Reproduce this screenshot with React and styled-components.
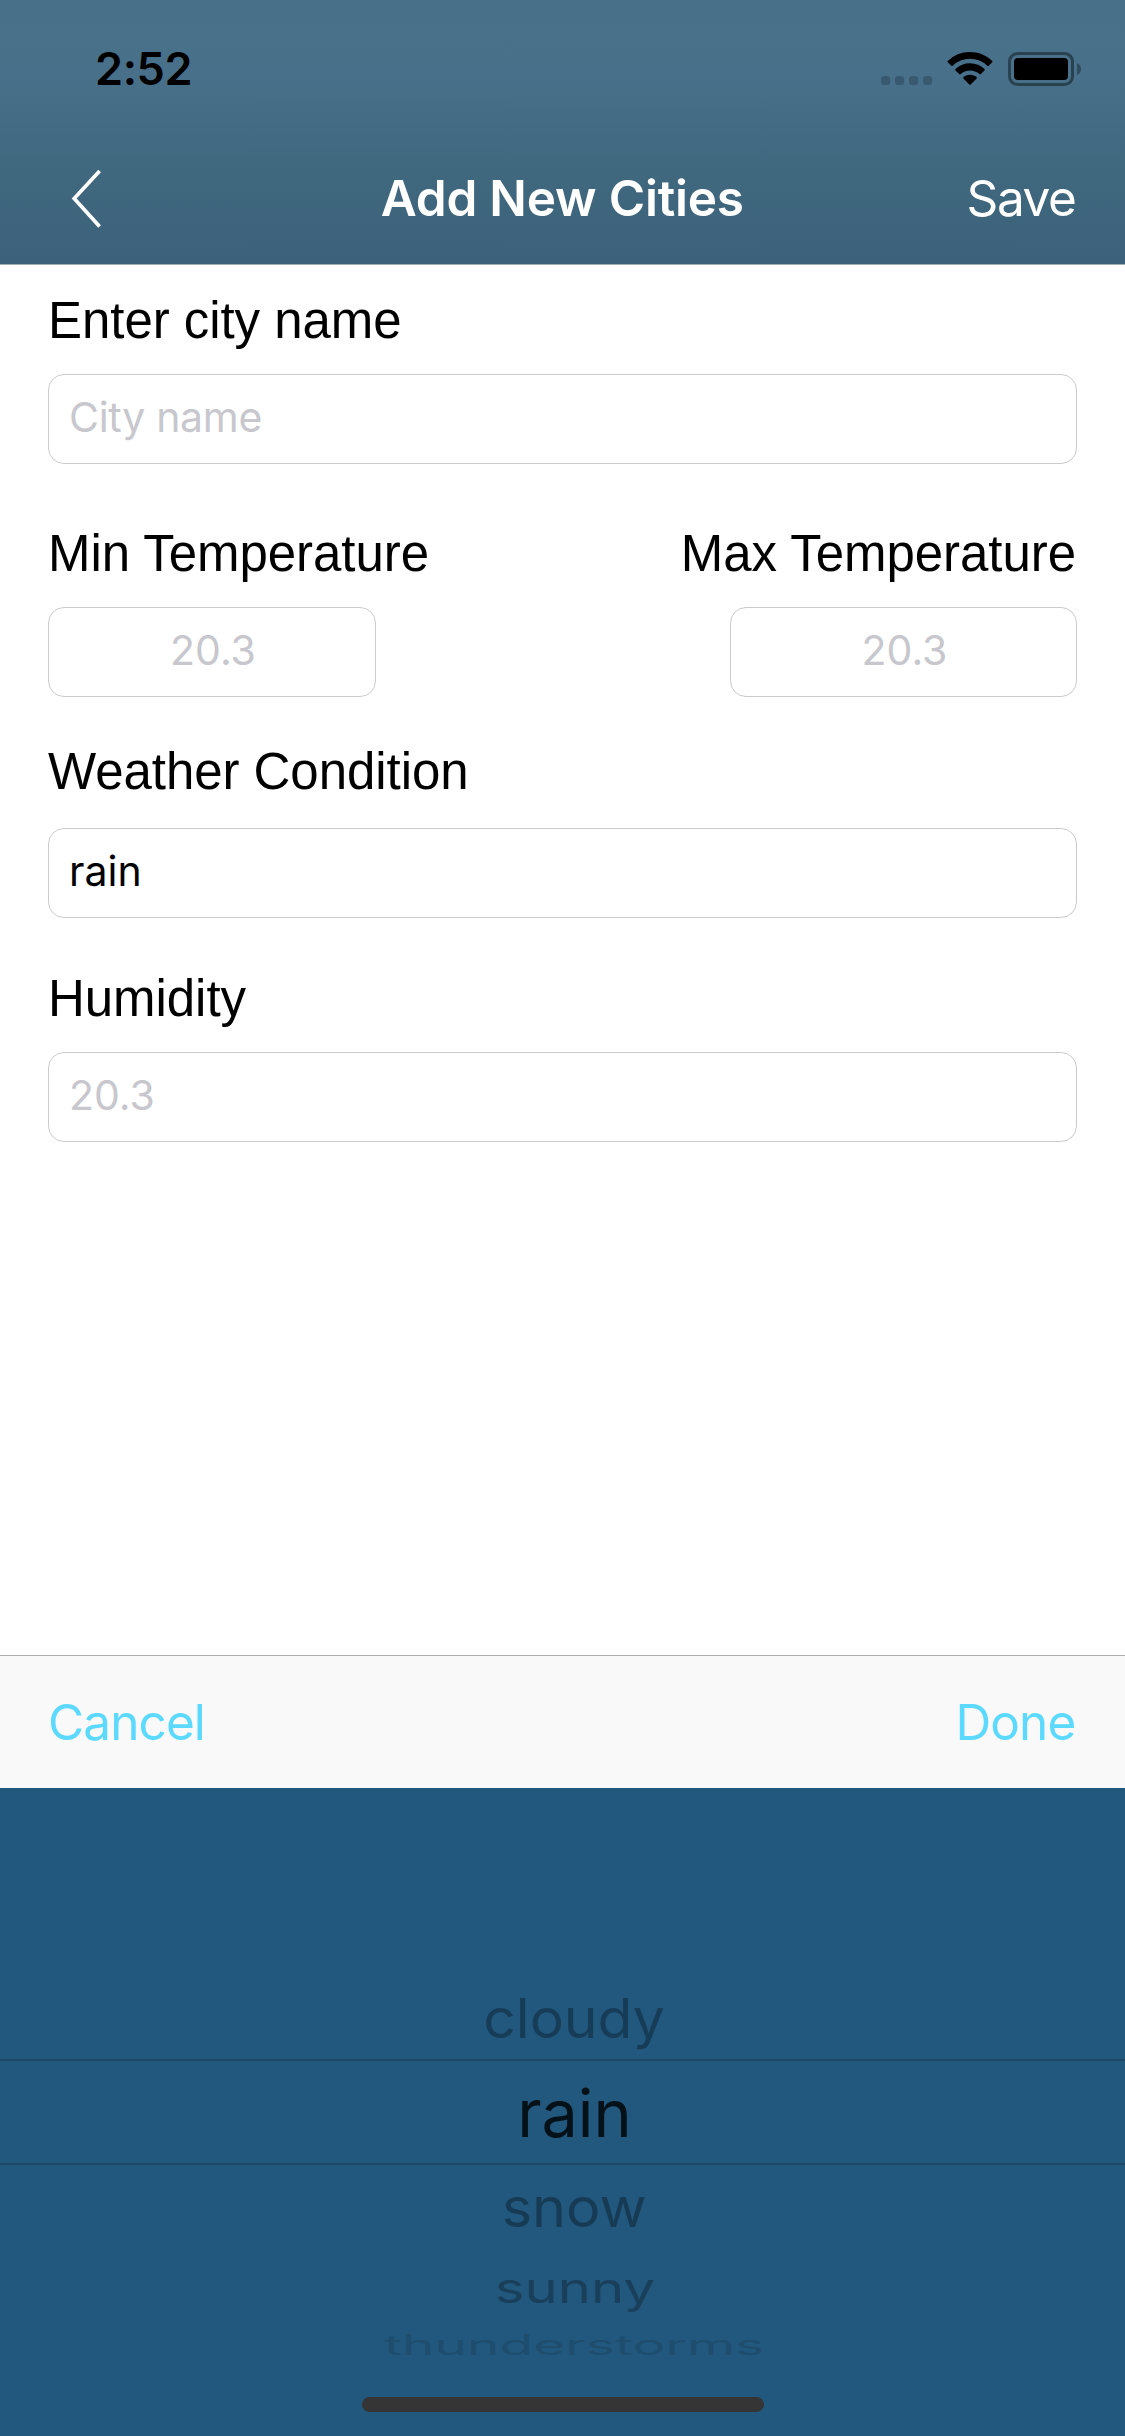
import React from 'react';
import styled, { createGlobalStyle } from 'styled-components';

const Global = createGlobalStyle`
  * { box-sizing: border-box; }
  body { margin: 0; background: #fff; }
`;

const Screen = styled.div`
  display: flex;
  flex-direction: column;
  width: 1125px;
  height: 2436px;
  overflow: hidden;
  background: #fff;
  color: #000;
  font-family: Inter, 'Liberation Sans', sans-serif;
`;

const Header = styled.header`
  height: 265px;
  border-bottom: 1px solid #a2adb1;
  background: linear-gradient(180deg, #487189 0, #48708a 75px, #40687f 165px, #3b627a 264px);
`;

const StatusBar = styled.div`
  display: flex;
  align-items: center;
  height: 132px;
  padding: 6px 43px 0 95px;
`;

const Clock = styled.div`
  flex: 1;
  font-size: 45px;
  font-weight: 600;
  line-height: 56px;
  letter-spacing: -0.4px;
`;

const StatusIcons = styled.svg`
  display: block;
  width: 201px;
  height: 34px;
`;

const NavBar = styled.nav`
  display: grid;
  grid-template-columns: 1fr auto 1fr;
  align-items: center;
  height: 132px;
  padding: 0 49.5px 0 71px;
  color: #fff;
`;

const BackIcon = styled.svg`
  display: block;
  width: 32px;
  height: 60px;
`;

const Title = styled.h1`
  margin: 0 22px 0 0;
  font-size: 49.5px;
  font-weight: 600;
  line-height: 60px;
  letter-spacing: -0.2px;
`;

const BarButton = styled.div`
  justify-self: end;
  font-size: 49.5px;
  line-height: 60px;
  letter-spacing: ${(p) => p.$tracking}px;
  color: ${(p) => p.$color};
`;

const Form = styled.main`
  flex: 1;
  padding: 26px 48px 0;
`;

const Field = styled.div`
  display: flex;
  flex-direction: column;
  align-items: ${(p) => p.$align || 'stretch'};
  gap: ${(p) => p.$gap || 23}px;
  margin-bottom: ${(p) => p.$after || 0}px;
`;

const FieldPair = styled.div`
  display: flex;
  justify-content: space-between;
  margin-bottom: 45px;
`;

const Label = styled.div`
  padding-right: 1px;
  font-family: 'Liberation Sans', Arial, sans-serif;
  font-size: 51px;
  line-height: 60px;
  letter-spacing: -0.05px;
  white-space: nowrap;
`;

const InputBox = styled.div`
  display: flex;
  align-items: center;
  justify-content: ${(p) => (p.$centered ? 'center' : 'flex-start')};
  width: ${(p) => (p.$width ? `${p.$width}px` : '100%')};
  height: 90px;
  padding: 0 ${(p) => (p.$centered ? '18px' : '20px')} 4px 20px;
  border: 1px solid #cbcbcb;
  border-radius: 16px;
  background: #fff;
  color: ${(p) => (p.$filled ? '#000' : '#c7c7cd')};
  font-size: 41px;
  line-height: 50px;
  letter-spacing: ${(p) => p.$tracking || 0}px;
`;

const Toolbar = styled.div`
  display: flex;
  align-items: center;
  justify-content: space-between;
  height: 133px;
  padding: 0 49.5px 0 48px;
  border-top: 1px solid #adb0b0;
  background: #f9f9f9;
`;

const Picker = styled.div`
  display: flex;
  flex-direction: column;
  height: 648px;
  padding-top: 189px;
  background: #22587d;
`;

const Option = styled.div`
  display: flex;
  align-items: center;
  justify-content: center;
  height: ${(p) => p.$height}px;
  padding: ${(p) => (p.$selected ? '2px' : '0')} 0 0 24px;
  color: ${(p) => p.$color};
  border: solid #1e4866;
  border-width: ${(p) => (p.$selected ? '2px 0' : '0')};
`;

const OptionText = styled.span`
  font-size: 66px;
  line-height: 80px;
  transform: scale(${(p) => p.$sx}, ${(p) => p.$sy});
`;

const HomeIndicator = styled.div`
  width: 402px;
  height: 15px;
  margin: 35px auto 0;
  border-radius: 8px;
  background: #353535;
`;

const OPTIONS = [
  { name: 'cloudy', height: 82, sx: 0.864, sy: 0.83, color: '#173c57' },
  { name: 'rain', height: 106, sx: 0.98, sy: 1, color: '#051119', selected: true },
  { name: 'snow', height: 83, sx: 0.872, sy: 0.83, color: '#173b55' },
  { name: 'sunny', height: 79, sx: 0.853, sy: 0.645, color: '#193f5b' },
  { name: 'thunderstorms', height: 35, sx: 0.833, sy: 0.42, color: '#1e4d6d' },
];

function Status() {
  return (
    <StatusIcons viewBox="881 52 201 34">
      {[881, 895, 909, 923].map((x) => (
        <rect key={x} x={x} y="76" width="9.2" height="9" rx="3.6" fill="#38596f" />
      ))}
      <path
        fill="#000"
        d="M970 52c8.7 0 16.6 3.4 22.2 8.9.4.4.4 1 0 1.4l-3.5 3.5c-.4.4-1 .4-1.4 0a24.8 24.8 0 0 0-34.6 0c-.4.4-1 .4-1.4 0l-3.5-3.5c-.4-.4-.4-1 0-1.4A31.7 31.7 0 0 1 970 52z"
      />
      <path
        fill="#000"
        d="M970 63.3c5.6 0 10.7 2.2 14.5 5.7.4.4.4 1 0 1.4l-3.7 3.7c-.4.4-1 .4-1.4 0a13.9 13.9 0 0 0-18.8 0c-.4.4-1 .4-1.4 0l-3.7-3.7c-.4-.4-.4-1 0-1.4A21.4 21.4 0 0 1 970 63.3z"
      />
      <path
        fill="#000"
        d="M970 74.8c2.5 0 4.7.9 6.5 2.3.5.4.5 1 .1 1.4l-5.9 6c-.4.4-1 .4-1.4 0l-5.900-6c-.4-.4-.4-1 .1-1.400a10.400 10.400 0 0 1 6.500-2.300z"
      />
      <rect x="1009.5" y="53.5" width="63" height="31" rx="8" fill="none" stroke="#294250" strokeWidth="3" />
      <rect x="1014" y="58" width="54" height="22" rx="4" fill="#000" />
      <path d="M1077 63c2.6 1.2 4.1 3.4 4.1 6s-1.5 4.8-4.1 6z" fill="#2f4b5c" />
    </StatusIcons>
  );
}

export default function App() {
  return (
    <Screen>
      <Global />
      <Header>
        <StatusBar>
          <Clock>2:52</Clock>
          <Status />
        </StatusBar>
        <NavBar>
          <BackIcon viewBox="71 168 32 60">
            <path d="M99.600 171 74.200 198.500l25.400 28" fill="none" stroke="#fff" strokeWidth="3.700" />
          </BackIcon>
          <Title>Add New Cities</Title>
          <BarButton $color="#fff" $tracking={-1.4}>Save</BarButton>
        </NavBar>
      </Header>

      <Form>
        <Field $after={60}>
          <Label>Enter city name</Label>
          <InputBox $tracking={-0.3}>City name</InputBox>
        </Field>
        <FieldPair>
          <Field>
            <Label>Min Temperature</Label>
            <InputBox $centered $width={328}>20.3</InputBox>
          </Field>
          <Field $align="flex-end">
            <Label>Max Temperature</Label>
            <InputBox $centered $width={347}>20.3</InputBox>
          </Field>
        </FieldPair>
        <Field $gap={26} $after={51}>
          <Label>Weather Condition</Label>
          <InputBox $filled>rain</InputBox>
        </Field>
        <Field>
          <Label>Humidity</Label>
          <InputBox>20.3</InputBox>
        </Field>
      </Form>

      <Toolbar>
        <BarButton $color="#5bd9ff" $tracking={-0.9}>Cancel</BarButton>
        <BarButton $color="#5bd9ff" $tracking={-0.85}>Done</BarButton>
      </Toolbar>
      <Picker>
        {OPTIONS.map((o) => (
          <Option key={o.name} $height={o.height} $color={o.color} $selected={o.selected}>
            <OptionText $sx={o.sx} $sy={o.sy}>{o.name}</OptionText>
          </Option>
        ))}
        <HomeIndicator />
      </Picker>
    </Screen>
  );
}
